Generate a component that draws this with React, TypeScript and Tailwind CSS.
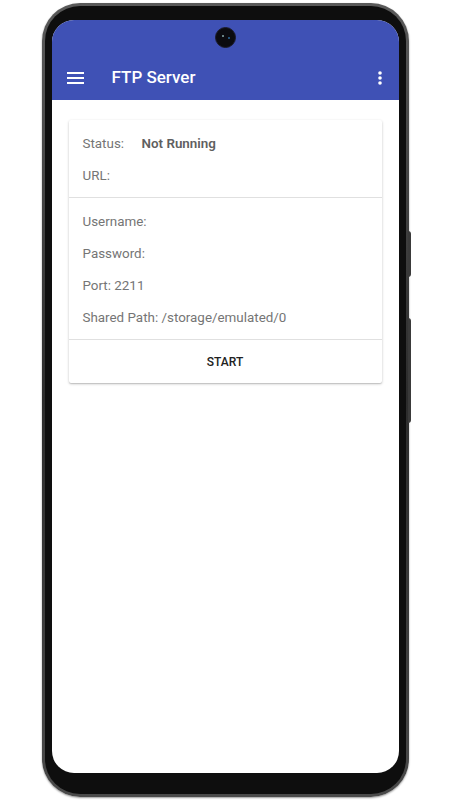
import React from "react"

const rows = ["Username:", "Password:", "Port: 2211", "Shared Path: /storage/emulated/0"]

function MenuIcon() {
  return (
    <svg width="17" height="12" viewBox="0 0 17 12" fill="#ffffff">
      <rect x="0" y="0" width="17" height="2" />
      <rect x="0" y="5" width="17" height="2" />
      <rect x="0" y="10" width="17" height="2" />
    </svg>
  )
}

function MoreIcon() {
  return (
    <svg width="4" height="14" viewBox="0 0 4 14" fill="#ffffff">
      <circle cx="2" cy="2" r="1.8" />
      <circle cx="2" cy="7" r="1.8" />
      <circle cx="2" cy="12" r="1.8" />
    </svg>
  )
}

export default function App() {
  return (
    <div className="w-[450px] h-[800px] bg-white flex justify-center font-['Roboto',sans-serif]">
      {/* Phone body */}
      <div className="relative mt-[3px] w-[367px] h-[794px] rounded-[38px] bg-gradient-to-b from-[#5a5a5a] via-[#2c2c2c] to-[#4a4a4a] p-[3px] shadow-[0_1px_2px_rgba(0,0,0,0.4)]">
        {/* side buttons */}
        <div className="absolute right-[-2px] top-[228px] w-[3px] h-[46px] rounded-r-sm bg-[#3a3a3a]" />
        <div className="absolute right-[-2px] top-[315px] w-[3px] h-[105px] rounded-r-sm bg-[#3a3a3a]" />

        <div className="w-full h-full rounded-[35px] bg-[#0e0e0e] pt-[14px] px-[7px] pb-[21px]">
          {/* Screen */}
          <div className="relative w-full h-full rounded-[22px] overflow-hidden bg-white flex flex-col">
            {/* camera */}
            <div className="absolute left-[163px] top-[7px] w-[21px] h-[21px] rounded-full bg-[#0b0b10] border border-[#1c1c2a]">
              <div className="absolute left-[6px] top-[7px] w-[2px] h-[2px] rounded-full bg-[#8aa]" />
              <div className="absolute left-[12px] top-[9px] w-[2px] h-[2px] rounded-full bg-[#2a6a9a]" />
            </div>

            {/* App bar */}
            <div className="h-[80px] bg-[#3f51b5] pt-[35px] shrink-0">
              <div className="h-[45px] flex items-center pl-[15px] pr-[17px]">
                <MenuIcon />
                <span className="ml-[28px] text-white text-[17px] font-medium">FTP Server</span>
                <div className="ml-auto">
                  <MoreIcon />
                </div>
              </div>
            </div>

            {/* Content */}
            <div className="px-[17px] pt-[20px]">
              <div className="bg-white rounded-[2px] shadow-[0_1px_3px_rgba(0,0,0,0.2),0_1px_1px_rgba(0,0,0,0.12)] text-[13.4px] leading-[20px]">
                <div className="px-[14px] pt-[14px] pb-[11px] flex flex-col gap-3 border-b border-[#e0e0e0]">
                  <div className="flex text-[#757575]">
                    <span className="w-[59px]">Status:</span>
                    <span className="font-semibold text-[#5f5f5f]">Not Running</span>
                  </div>
                  <div className="text-[#757575]">URL:</div>
                </div>
                <div className="px-[14px] pt-[14px] pb-[11px] flex flex-col gap-3 border-b border-[#e0e0e0]">
                  {rows.map((r) => (
                    <div key={r} className="text-[#757575]">
                      {r}
                    </div>
                  ))}
                </div>
                <div className="h-[43px] flex items-center justify-center text-[12px] font-medium text-[#212121]">
                  START
                </div>
              </div>
            </div>
          </div>
        </div>
      </div>
    </div>
  )
}
